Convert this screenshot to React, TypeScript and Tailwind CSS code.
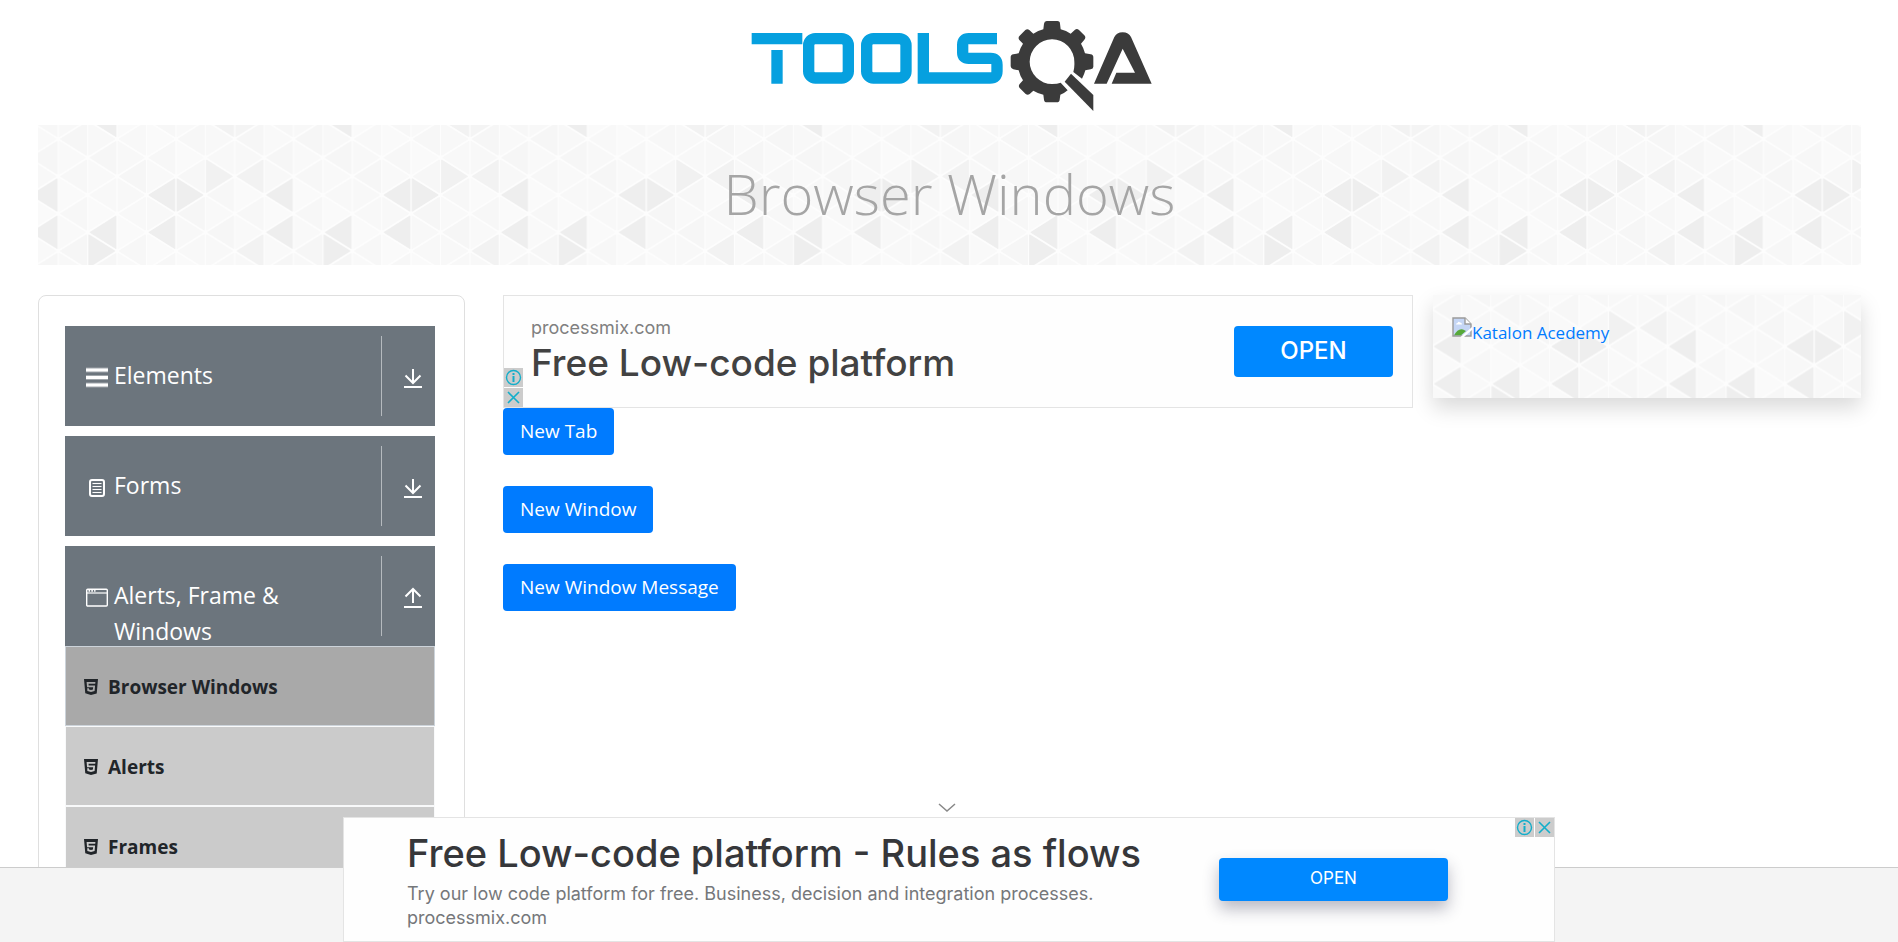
import { useId, type ReactNode } from "react";
import { SiHtml5 } from "react-icons/si";

/* ---------- Triangle backdrop ---------- */

const COL = 235.2 / 8;
const STEP = 37.33;
const DARK = "#eeeeee";
const MID = "#f2f2f2";

// Shaded triangles, keyed by column, direction and apex row (in half steps from the centre).
const SHADES: Record<string, string> = {
  "3L0": DARK,
  "4R0": DARK,
  "7L0": DARK,
  "7L2": DARK,
  "3L2": DARK,
  "1L2": DARK,
  "1R3": DARK,
  "6L3": MID,
  "5R-1": "#f1f1f1",
  "6L-1": MID,
  "1L-4": DARK,
  "5L-4": MID,
  "6R-4": "#f4f4f4",
};
const LEFT_TONES = ["#f6f6f6", "#f7f7f7", "#f8f8f8"];
const RIGHT_TONES = ["#fafafa", "#f8f8f8", "#f9f9f9"];

function buildTriangles() {
  const out: { key: string; d: string; fill: string }[] = [];
  for (let col = 0; col < 8; col++) {
    for (let row = -6; row <= 6; row++) {
      const leftLineIsOdd = col % 2 === 1;
      const rowIsEven = row % 2 === 0;
      const pointsLeft = leftLineIsOdd === rowIsEven;
      const x0 = col * COL;
      const x1 = x0 + COL;
      const y = (row * STEP) / 2;
      const apex = pointsLeft ? x0 + 2.6 : x1 - 2.6;
      const base = pointsLeft ? x1 - 1.2 : x0 + 1.2;
      const name = `${col}${pointsLeft ? "L" : "R"}${row}`;
      const tones = pointsLeft ? LEFT_TONES : RIGHT_TONES;
      out.push({
        key: name,
        d: `M${apex} ${y}L${base} ${y - STEP / 2 + 2.6}V${y + STEP / 2 - 2.6}Z`,
        fill: SHADES[name] ?? tones[Math.abs(col * 5 + row * 7) % 3],
      });
    }
  }
  return out;
}

const TRIANGLES = buildTriangles();

function TriangleBackdrop() {
  const id = useId();
  return (
    <svg className="absolute inset-0 h-full w-full" aria-hidden="true">
      <defs>
        <pattern
          id={id}
          patternUnits="userSpaceOnUse"
          x={-68 - COL * 4}
          y={-STEP * 3}
          width={COL * 8}
          height={STEP * 6}
          viewBox={`0 ${-STEP * 3} ${COL * 8} ${STEP * 6}`}
        >
          <rect y={-STEP * 3} width={COL * 8} height={STEP * 6} fill="#fdfdfd" />
          {TRIANGLES.map((t) => (
            <path key={t.key} d={t.d} fill={t.fill} stroke={t.fill} strokeWidth="1" strokeLinejoin="round" />
          ))}
        </pattern>
      </defs>
      <svg x="50%" y="50%" overflow="visible">
        <rect x="-2000" y="-100" width="4000" height="200" fill={`url(#${id})`} />
      </svg>
    </svg>
  );
}

/* ---------- Logo and icons ---------- */

function Logo() {
  return (
    <svg className="h-[125px] w-[440px]" viewBox="-3 0 1320 375" role="img" aria-label="Tools QA">
      <g fill="none" stroke="#06a0df" strokeWidth="34">
        <path d="M65 116H217M141 150V251" />
        <rect x="236" y="116" width="119" height="118" rx="20" />
        <rect x="410" y="116" width="118" height="118" rx="20" />
        <path d="M580 99V234H780Q801 234 801 214V194Q801 175 782 175H716Q698 175 698 158V134Q698 116 716 116H801" />
      </g>
      <g fill="#3b3b3b">
        <path
          fillRule="evenodd"
          d="M950 63H982Q990 63 990 71L992 88Q1009 92 1022 101L1035 89Q1041 84 1047 90L1063 106Q1069 112 1063 119L1053 131Q1061 144 1065 160L1082 163Q1090 164 1090 172V200Q1090 207 1082 208L1066 211Q1063 223 1056 236L1030 216Q1034 203 1033 186A67 67 0 1 0 967 252Q982 252 992 248L1013 271Q1003 280 991 284L989 299Q988 307 980 307H951Q943 307 942 299L940 284Q923 280 910 272L899 282Q893 287 887 282L869 264Q864 258 869 252L879 241Q870 228 866 211L850 208Q843 207 842 199V172Q842 164 850 163L866 160Q870 144 879 131L868 120Q863 113 869 107L886 90Q892 85 898 90L910 101Q924 92 940 88L942 71Q943 63 950 63Z"
        />
        <path d="M1023 221L1090 285V333L1004 245Z" />
        <path d="M1092 251L1153 111Q1160 97 1178 97Q1196 97 1203 111L1265 251H1145L1159 218H1215L1178 146L1130 251Z" />
      </g>
    </svg>
  );
}

function BarsIcon() {
  return (
    <svg className="size-6" viewBox="0 0 24 24" aria-hidden="true">
      <path d="M1 4H23M1 11.5H23M1 19H23" stroke="#fff" strokeOpacity=".35" strokeWidth="5" />
      <path d="M1 4H23M1 11.5H23M1 19H23" stroke="#fff" strokeWidth="3" />
    </svg>
  );
}

function FormIcon() {
  return (
    <svg className="size-6" viewBox="0 0 24 24" fill="none" stroke="#fff" aria-hidden="true">
      <rect x="5" y="4" width="14" height="16" rx="2" strokeWidth="2" />
      <path d="M7.5 7.5H16.5M7.5 10.5H16.5M7.5 13.5H16.5M7.5 16.5H16.5" />
    </svg>
  );
}

function WindowIcon() {
  return (
    <svg className="size-6" viewBox="0 0 24 24" fill="none" stroke="#fff" aria-hidden="true">
      <rect x="1.7" y="3.2" width="20.6" height="16.8" rx="1" strokeWidth="1.4" />
      <path d="M2 7H22" strokeWidth="1.2" />
      <path d="M3.5 4.9H10.5" strokeWidth="1.8" strokeDasharray="1.6 1.2" />
    </svg>
  );
}

function ArrowIcon({ up }: { up?: boolean }) {
  return (
    <svg className="size-6" viewBox="0 0 24 24" fill="none" stroke="#fff" strokeWidth="2" aria-hidden="true">
      <path d={up ? "M12 17V3M4.5 10.5L12 3L19.5 10.5" : "M12 3V17M4.5 9.5L12 17L19.5 9.5"} />
      <path d="M3 21H21" />
    </svg>
  );
}

function AdBadges({ className }: { className: string }) {
  return (
    <div className={`absolute flex gap-px ${className}`}>
      <a href="#why" aria-label="Why this ad" className="flex size-[19px] items-center justify-center bg-[#cccccc]">
        <svg className="size-[17px]" viewBox="0 0 17 17" fill="none" stroke="#12aeca" aria-hidden="true">
          <circle cx="8.5" cy="8.5" r="7" strokeWidth="1.4" />
          <path d="M8.5 4V6M8.5 7V13" strokeWidth="2" />
        </svg>
      </a>
      <button type="button" aria-label="Close ad" className="flex size-[19px] items-center justify-center bg-[#cccccc]">
        <svg className="size-[13px]" viewBox="0 0 13 13" stroke="#12aeca" strokeWidth="1.6" aria-hidden="true">
          <path d="M1 1L12 12M12 1L1 12" />
        </svg>
      </button>
    </div>
  );
}

function BrokenImageIcon() {
  return (
    <svg className="size-5" viewBox="0 0 20 20" aria-hidden="true">
      <path d="M1 1H13L19 7V19H1Z" fill="#c5d6f5" stroke="#9a9a9a" strokeWidth="1.4" />
      <path d="M13 1V7H19" fill="#fff" stroke="#9a9a9a" strokeWidth="1.4" />
      <path d="M4 7.5Q4 6 5.5 6Q6.5 4 8 5.5Q10 5.5 10 7.5Z" fill="#fff" />
      <path d="M2 18.3Q6 11 11 12.5L14 14L9 18.3Z" fill="#57a93a" />
      <path d="M8.5 20L20 10V13L12 20Z" fill="#fff" />
    </svg>
  );
}

/* ---------- Page parts ---------- */

function GroupHeader({ icon, label, open }: { icon: ReactNode; label: string; open?: boolean }) {
  return (
    <button
      type="button"
      aria-expanded={!!open}
      className="flex h-[100px] w-full items-stretch bg-[#6c757d] py-[10px] pr-[10px] pl-5 text-left text-white"
    >
      <span className="flex w-[29px] shrink-0 pt-[30px]">{icon}</span>
      <span className="mr-16 flex-1 pt-[21px] text-[23px] leading-9">{label}</span>
      <span className="flex w-11 items-center justify-end border-l border-[#b5babe] pt-1">
        <ArrowIcon up={open} />
      </span>
    </button>
  );
}

const ENTRIES = [
  { label: "Browser Windows", tone: "border-[#ccd3da] bg-[#a9a9a9]" },
  { label: "Alerts", tone: "border-[#f8f9fa] bg-[#cbcbcb]" },
  { label: "Frames", tone: "border-[#f8f9fa] bg-[#cbcbcb]" },
];

function Sidebar() {
  return (
    <nav className="w-[427px] shrink-0 rounded-lg border border-[#dfdfdf] pt-[30px] pr-[29px] pb-8 pl-[26px]">
      <div className="flex flex-col gap-[10px]">
        <GroupHeader icon={<BarsIcon />} label="Elements" />
        <GroupHeader icon={<FormIcon />} label="Forms" />
        <GroupHeader icon={<WindowIcon />} label="Alerts, Frame & Windows" open />
      </div>
      <ul>
        {ENTRIES.map((e) => (
          <li key={e.label} className={`border ${e.tone}`}>
            <a
              href="#entry"
              className="flex h-[78px] items-center gap-[9px] pt-0.5 pl-[17px] text-[19px] font-bold text-[#212529]"
            >
              <SiHtml5 className="size-4" aria-hidden="true" />
              {e.label}
            </a>
          </li>
        ))}
      </ul>
    </nav>
  );
}

function InlineAd() {
  return (
    <aside className="relative flex h-[113px] items-start justify-between border border-[#e4e4e4] bg-[#fefefe] pr-[19px] pl-[27px] font-['Inter',sans-serif]">
      <div className="pt-5">
        <p className="text-[18px] leading-6 text-[#808080]">processmix.com</p>
        <p className="text-[37px] leading-[46px] font-medium text-[#424242]">Free Low-code platform</p>
      </div>
      <button
        type="button"
        className="mt-[30px] h-[51px] w-[159px] rounded bg-[#0088ff] pb-0.5 text-[24px] leading-8 font-medium text-white"
      >
        OPEN
      </button>
      <AdBadges className="bottom-0 left-0 flex-col" />
    </aside>
  );
}

function BottomAd() {
  return (
    <aside className="absolute bottom-0 left-1/2 h-[125px] w-[1212px] max-w-full -translate-x-1/2 border border-[#e4e4e4] bg-[#fefefe] font-['Inter',sans-serif]">
      <button type="button" aria-label="Hide ad" className="absolute -top-[19px] left-1/2 -ml-3">
        <svg className="h-4 w-5" viewBox="0 0 20 16" fill="none" stroke="#888" strokeWidth="1.5" aria-hidden="true">
          <path d="M2 5L10 12L18 5" />
        </svg>
      </button>
      <div className="flex items-start justify-between pr-[106px] pl-[63px]">
        <div className="pt-[10px]">
          <p className="text-[38px] leading-[50px] font-medium text-[#36373a]">Free Low-code platform - Rules as flows</p>
          <p className="mt-1 text-[18px] leading-6 text-[#75777a]">
            Try our low code platform for free. Business, decision and integration processes.
          </p>
          <p className="text-[18px] leading-6 text-[#75777a]">processmix.com</p>
        </div>
        <button
          type="button"
          className="mt-10 h-[43px] w-[229px] rounded bg-[#0088ff] pb-0.5 text-[17px] text-white shadow-[0_8px_16px_rgba(40,40,70,0.32)]"
        >
          OPEN
        </button>
      </div>
      <AdBadges className="top-0 right-0" />
    </aside>
  );
}

const ACTIONS = ["New Tab", "New Window", "New Window Message"];

export default function App() {
  return (
    <div className="relative flex h-screen flex-col overflow-hidden bg-white font-['Open_Sans','Noto_Sans',sans-serif] text-[#212529]">
      <header className="flex shrink-0 justify-center">
        <a href="#home">
          <Logo />
        </a>
      </header>

      <div className="flex min-h-0 flex-1 flex-col pr-[37px] pl-[38px]">
        <div className="relative flex h-[140px] shrink-0 items-center justify-center">
          <TriangleBackdrop />
          <h1 className="relative pb-1 text-[56px] leading-[72px] font-light text-[#a5a5a5]">Browser Windows</h1>
        </div>

        <div className="mt-[30px] flex min-h-0 flex-1 items-start">
          <Sidebar />
          <main className="ml-[38px] min-w-0 flex-1">
            <InlineAd />
            <div className="flex flex-col items-start gap-[31px]">
              {ACTIONS.map((label) => (
                <button
                  key={label}
                  type="button"
                  className="h-[47px] rounded bg-[#007bff] px-[17px] text-[19px] text-white"
                >
                  {label}
                </button>
              ))}
            </div>
          </main>
          <aside className="relative ml-5 h-[103px] w-[428px] shrink-0 px-[19px] pt-[22px] shadow-[0_10px_20px_rgba(0,0,0,0.15)]">
            <TriangleBackdrop />
            <a href="#academy" className="relative flex items-start text-[17px] leading-8 text-[#007bff]">
              <BrokenImageIcon />
              Katalon Acedemy
            </a>
          </aside>
        </div>
      </div>

      <footer className="relative h-[75px] shrink-0 border-t border-[#cccccc] bg-[#f4f4f4]" />
      <BottomAd />
    </div>
  );
}
